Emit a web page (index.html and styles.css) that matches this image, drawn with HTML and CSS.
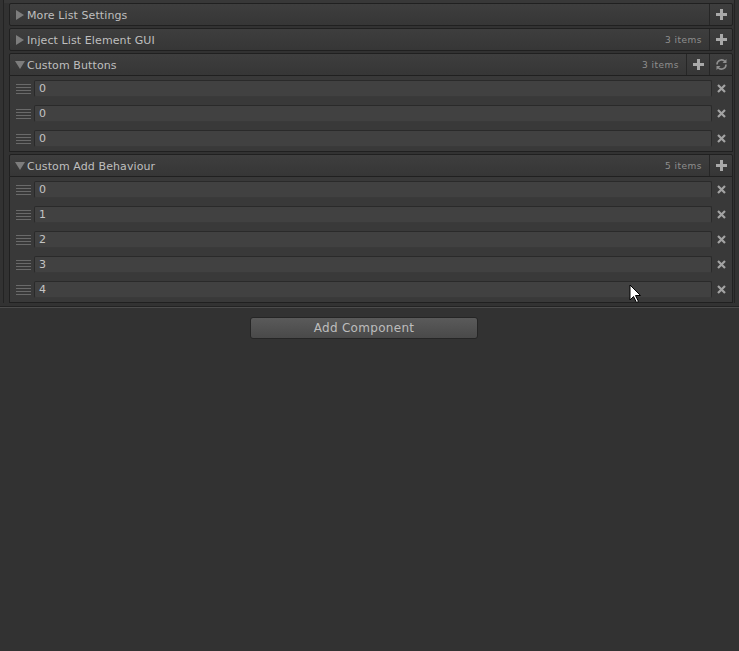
FILE: index.html
```html
<!DOCTYPE html>
<html>
<head>
<meta charset="utf-8">
<link rel="stylesheet" href="styles.css">
</head>
<body>
<div class="prev"></div>
<div class="panel">
  <div class="header">
    <span class="tri right"></span>
    <span class="title">More List Settings</span>
    <span class="btn"><svg width="11" height="11" viewBox="0 0 11 11"><path d="M4 0h3v4h4v3H7v4H4V7H0V4h4z" fill="#a9a9a9"/></svg></span>
  </div>
  <div class="header">
    <span class="tri right"></span>
    <span class="title">Inject List Element GUI</span>
    <span class="count">3 items</span>
    <span class="btn"><svg width="11" height="11" viewBox="0 0 11 11"><path d="M4 0h3v4h4v3H7v4H4V7H0V4h4z" fill="#a9a9a9"/></svg></span>
  </div>
  <div class="header open">
    <span class="tri down"></span>
    <span class="title">Custom Buttons</span>
    <span class="count">3 items</span>
    <span class="btn"><svg width="11" height="11" viewBox="0 0 11 11"><path d="M4 0h3v4h4v3H7v4H4V7H0V4h4z" fill="#a9a9a9"/></svg></span>
    <span class="btn"><svg width="13" height="13" viewBox="0 0 13 13"><path d="M2 6.5A4.5 4.5 0 0 1 10 3.6" fill="none" stroke="#8f8f8f" stroke-width="1.6"/><path d="M11.5 1v4h-4z" fill="#8f8f8f"/><path d="M11 6.5A4.5 4.5 0 0 1 3 9.4" fill="none" stroke="#8f8f8f" stroke-width="1.6"/><path d="M1.5 12V8h4z" fill="#8f8f8f"/></svg></span>
  </div>
  <div class="list">
    <div class="row"><span class="handle"></span><span class="field">0</span><span class="del"><svg width="9" height="9" viewBox="0 0 9 9"><path d="M1 1l7 7M8 1l-7 7" stroke="#a3a3a3" stroke-width="2.2"/></svg></span></div>
    <div class="row"><span class="handle"></span><span class="field">0</span><span class="del"><svg width="9" height="9" viewBox="0 0 9 9"><path d="M1 1l7 7M8 1l-7 7" stroke="#a3a3a3" stroke-width="2.2"/></svg></span></div>
    <div class="row"><span class="handle"></span><span class="field">0</span><span class="del"><svg width="9" height="9" viewBox="0 0 9 9"><path d="M1 1l7 7M8 1l-7 7" stroke="#a3a3a3" stroke-width="2.2"/></svg></span></div>
  </div>
  <div class="header open">
    <span class="tri down"></span>
    <span class="title">Custom Add Behaviour</span>
    <span class="count">5 items</span>
    <span class="btn"><svg width="11" height="11" viewBox="0 0 11 11"><path d="M4 0h3v4h4v3H7v4H4V7H0V4h4z" fill="#a9a9a9"/></svg></span>
  </div>
  <div class="list">
    <div class="row"><span class="handle"></span><span class="field">0</span><span class="del"><svg width="9" height="9" viewBox="0 0 9 9"><path d="M1 1l7 7M8 1l-7 7" stroke="#a3a3a3" stroke-width="2.2"/></svg></span></div>
    <div class="row"><span class="handle"></span><span class="field">1</span><span class="del"><svg width="9" height="9" viewBox="0 0 9 9"><path d="M1 1l7 7M8 1l-7 7" stroke="#a3a3a3" stroke-width="2.2"/></svg></span></div>
    <div class="row"><span class="handle"></span><span class="field">2</span><span class="del"><svg width="9" height="9" viewBox="0 0 9 9"><path d="M1 1l7 7M8 1l-7 7" stroke="#a3a3a3" stroke-width="2.2"/></svg></span></div>
    <div class="row"><span class="handle"></span><span class="field">3</span><span class="del"><svg width="9" height="9" viewBox="0 0 9 9"><path d="M1 1l7 7M8 1l-7 7" stroke="#a3a3a3" stroke-width="2.2"/></svg></span></div>
    <div class="row"><span class="handle"></span><span class="field">4</span><span class="del"><svg width="9" height="9" viewBox="0 0 9 9"><path d="M1 1l7 7M8 1l-7 7" stroke="#a3a3a3" stroke-width="2.2"/></svg></span></div>
  </div>
</div>
<div class="sep"></div>
<div class="actions">
  <button class="add">Add Component</button>
</div>
<svg class="cursor" width="13" height="20" viewBox="0 0 13 20"><path d="M1 1v15l3.5-3.5 3 6 2-1-3-6h5z" fill="#fff" stroke="#000" stroke-width="1"/></svg>
</body>
</html>
```

FILE: styles.css
```css
html, body {
  margin: 0;
  padding: 0;
}
body {
  background: #323232;
  width: 739px;
  height: 651px;
  overflow: hidden;
  font-family: "DejaVu Sans", Verdana, sans-serif;
  font-size: 11px;
  color: #c2c2c2;
  position: relative;
}
.prev {
  height: 3px;
  margin: 0 4px 0 3px;
  background: #383838;
  border-left: 1px solid #222;
  border-right: 1px solid #222;
}
.panel {
  margin: 0 4px 0 3px;
  border-left: 1px solid #232323;
  border-right: 1px solid #232323;
  padding: 0 1px 0 5px;
}
.header {
  display: flex;
  align-items: stretch;
  height: 21px;
  border: 1px solid #202020;
  border-radius: 2px;
  background: linear-gradient(#3e3e3e, #363636);
  margin-bottom: 2px;
}
.header.open {
  margin-bottom: 0;
  border-radius: 2px 2px 0 0;
}
.tri {
  width: 0;
  height: 0;
  align-self: center;
}
.tri.right {
  margin: 0 3px 0 6px;
  border-top: 5px solid transparent;
  border-bottom: 5px solid transparent;
  border-left: 8px solid #7d7d7d;
}
.tri.down {
  margin: 0 2px 0 5px;
  border-left: 5px solid transparent;
  border-right: 5px solid transparent;
  border-top: 8px solid #7d7d7d;
}
.title {
  flex: 1;
  display: flex;
  align-items: center;
  letter-spacing: 0.1px;
  color: #bfbfbf;
  padding-top: 1px;
}
.count {
  display: flex;
  align-items: center;
  font-size: 9px;
  letter-spacing: 0.5px;
  color: #8f8f8f;
  padding-right: 7px;
}
.btn {
  width: 22px;
  border-left: 1px solid #262626;
  display: flex;
  align-items: center;
  justify-content: center;
}
.list {
  border: 1px solid #202020;
  border-top: none;
  background: #393939;
  margin-bottom: 2px;
  padding-left: 6px;
  padding-right: 1px;
}
.row {
  display: flex;
  align-items: center;
  height: 25px;
}
.handle {
  width: 15px;
  height: 10px;
  margin-right: 3px;
  background: repeating-linear-gradient(#6a6a6a 0 1px, transparent 1px 3px);
}
.field {
  flex: 1;
  height: 15px;
  border: 1px solid #2a2a2a;
  border-bottom-color: #3a3a3a;
  border-radius: 2px;
  background: #414141;
  padding-left: 4px;
  line-height: 15px;
  color: #c4c4c4;
}
.del {
  width: 19px;
  display: flex;
  justify-content: center;
  align-items: center;
}
.sep {
  margin-top: 3px;
  height: 1px;
  background: #232323;
  border-bottom: 1px solid #4c4c4c;
}
.actions {
  padding: 9px 0 0 250px;
}
.add {
  width: 228px;
  height: 22px;
  border: 1px solid #252525;
  border-radius: 3px;
  background: linear-gradient(#5a5a5a, #494949);
  color: #bdbdbd;
  font-family: "DejaVu Sans", Verdana, sans-serif;
  font-size: 12px;
  letter-spacing: 0.3px;
  padding: 0;
}
.cursor {
  position: absolute;
  left: 629px;
  top: 284px;
}
```
